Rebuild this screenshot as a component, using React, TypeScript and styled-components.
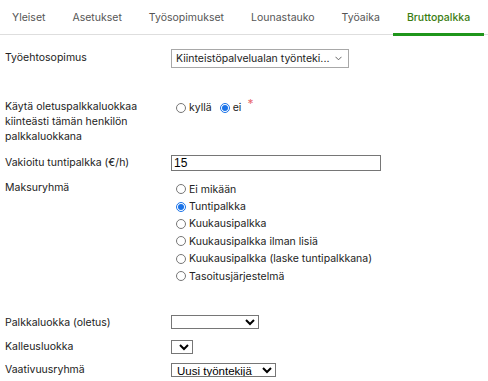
import React, { useState } from 'react';
import styled, { createGlobalStyle } from 'styled-components';

const GlobalStyle = createGlobalStyle`
  body {
    margin: 0;
    background: #fff;
    font-family: Inter, "Noto Sans", sans-serif;
    font-size: 10.5px;
    color: #222;
  }
`;

const TabBar = styled.div`
  display: flex;
  height: 34px;
  border-bottom: 1px solid #dedede;
`;

const Tab = styled.div<{ active?: boolean }>`
  display: flex;
  align-items: center;
  padding: 1px 13.5px 0 13.5px;
  font-size: 10.5px;
  color: ${({ active }) => (active ? '#3b7d12' : '#555')};
  font-weight: ${({ active }) => (active ? 500 : 400)};
  border-bottom: 3px solid ${({ active }) => (active ? '#1f961b' : 'transparent')};
  margin-bottom: -2px;
  white-space: nowrap;
  &:first-child {
    padding-left: 12px;
  }
`;

const Form = styled.div`
  padding-left: 5px;
`;

const Row = styled.div<{ top: number }>`
  display: grid;
  grid-template-columns: 166px 1fr;
  align-items: start;
  margin-top: ${({ top }) => top}px;
`;

const Label = styled.div<{ pad?: number }>`
  line-height: 15px;
  padding-top: ${({ pad }) => pad ?? 0}px;
  width: 140px;
`;

const SelectBox = styled.div`
  display: flex;
  align-items: center;
  justify-content: space-between;
  width: 178px;
  height: 19px;
  box-sizing: border-box;
  border: 1px solid #a8a8a8;
  padding: 0 5px 0 4px;
  color: #222;
  white-space: nowrap;
`;

const Chevron = styled.svg`
  width: 7px;
  height: 5px;
  margin-right: 1px;
`;

const RadioLine = styled.div`
  display: flex;
  align-items: center;
  height: 15px;
  padding-top: 2px;
`;

const RadioOption = styled.label<{ gap?: number }>`
  display: flex;
  align-items: center;
  margin-left: ${({ gap }) => gap ?? 0}px;
  color: #222;
`;

const Radio = styled.input`
  width: 10px;
  height: 10px;
  margin: 0 3px 0 5px;
  accent-color: #1a73e8;
`;

const Required = styled.span`
  color: #e86a6e;
  margin-left: 6px;
  font-size: 12px;
  align-self: flex-start;
  margin-top: -4px;
`;

const TextInput = styled.input`
  width: 210px;
  height: 16px;
  box-sizing: border-box;
  border: 1px solid #767676;
  padding: 0 2px;
  font-family: "Liberation Sans", Arial, sans-serif;
  font-size: 12px;
  color: #000;
  outline: none;
`;

const RadioList = styled.div`
  display: flex;
  flex-direction: column;
  padding-top: 1px;
`;

const ListItem = styled.label`
  display: flex;
  align-items: center;
  height: 17.4px;
  color: #222;
`;

const NativeSelect = styled.select<{ w: number }>`
  width: ${({ w }) => w}px;
  height: 14px;
  margin-top: 0.5px;
  padding: 0 0 0 1px;
  box-sizing: border-box;
  border: 1px solid #767676;
  border-radius: 0;
  background: #fff;
  font-family: "Liberation Sans", Arial, sans-serif;
  font-size: 11.5px;
  line-height: 1;
  color: #000;
`;

const tabs = ['Yleiset', 'Asetukset', 'Työsopimukset', 'Lounastauko', 'Työaika', 'Bruttopalkka'];

const groups = [
  'Ei mikään',
  'Tuntipalkka',
  'Kuukausipalkka',
  'Kuukausipalkka ilman lisiä',
  'Kuukausipalkka (laske tuntipalkkana)',
  'Tasoitusjärjestelmä',
];

const App: React.FC = () => {
  const [fixed, setFixed] = useState('ei');
  const [group, setGroup] = useState('Tuntipalkka');
  const [wage, setWage] = useState('15');

  return (
    <>
      <GlobalStyle />
      <TabBar>
        {tabs.map((t) => (
          <Tab key={t} active={t === 'Bruttopalkka'}>
            {t}
          </Tab>
        ))}
      </TabBar>
      <Form>
        <Row top={14}>
          <Label pad={1}>Työehtosopimus</Label>
          <SelectBox>
            <span>Kiinteistöpalvelualan työnteki...</span>
            <Chevron viewBox="0 0 7 5">
              <path d="M0.5 0.8 L3.5 3.8 L6.5 0.8" fill="none" stroke="#555" strokeWidth="0.9" />
            </Chevron>
          </SelectBox>
        </Row>

        <Row top={30}>
          <Label pad={0.5}>Käytä oletuspalkkaluokkaa kiinteästi tämän henkilön palkkaluokkana</Label>
          <RadioLine>
            <RadioOption>
              <Radio type="radio" checked={fixed === 'kyllä'} onChange={() => setFixed('kyllä')} />
              kyllä
            </RadioOption>
            <RadioOption gap={3}>
              <Radio type="radio" checked={fixed === 'ei'} onChange={() => setFixed('ei')} />
              ei
            </RadioOption>
            <Required>*</Required>
          </RadioLine>
        </Row>

        <Row top={11}>
          <Label pad={0.5}>Vakioitu tuntipalkka (€/h)</Label>
          <TextInput value={wage} onChange={(e) => setWage(e.target.value)} />
        </Row>

        <Row top={9}>
          <Label>Maksuryhmä</Label>
          <RadioList>
            {groups.map((g) => (
              <ListItem key={g}>
                <Radio type="radio" checked={group === g} onChange={() => setGroup(g)} />
                {g}
              </ListItem>
            ))}
          </RadioList>
        </Row>

        <Row top={30}>
          <Label pad={0.5}>Palkkaluokka (oletus)</Label>
          <NativeSelect w={88}>
            <option></option>
          </NativeSelect>
        </Row>

        <Row top={9}>
          <Label>Kalleusluokka</Label>
          <NativeSelect w={22}>
            <option></option>
          </NativeSelect>
        </Row>

        <Row top={8}>
          <Label>Vaativuusryhmä</Label>
          <NativeSelect w={105}>
            <option>Uusi työntekijä</option>
          </NativeSelect>
        </Row>
      </Form>
    </>
  );
};

export default App;
